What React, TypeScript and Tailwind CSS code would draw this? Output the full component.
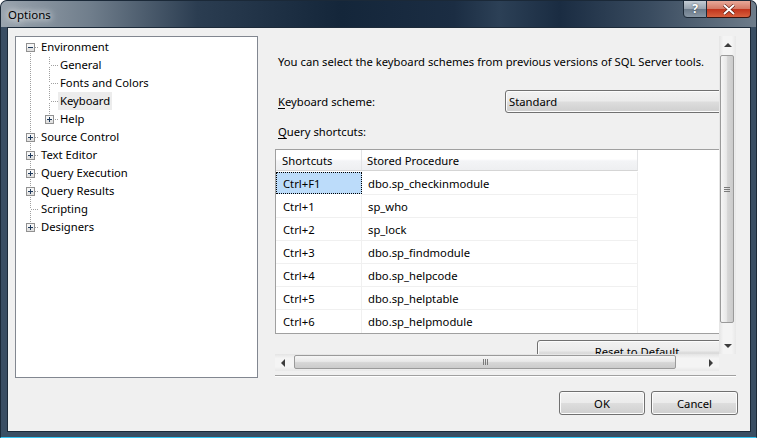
import React from 'react';

const FONT = "font-['Noto_Sans',sans-serif] text-[11.25px] leading-[16px] text-black";

// dotted line pieces for the tree gutter
const vdots = (x: number, y0: number, y1: number, k: string) => {
  const out: React.ReactNode[] = [];
  for (let y = y0; y <= y1; y++) if (y % 2 === 1) out.push(<rect key={k + y} x={x} y={y} width={1} height={1} fill="#a0a0a0" />);
  return out;
};
const hdots = (y: number, x0: number, x1: number, k: string) => {
  const out: React.ReactNode[] = [];
  for (let x = x0; x <= x1; x++) if (x % 2 === 1) out.push(<rect key={k + x} x={x} y={y} width={1} height={1} fill="#a0a0a0" />);
  return out;
};

const Box = ({ x, kind }: { x: number; kind: 'plus' | 'minus' }) => (
  <g>
    <rect x={x + 0.5} y={5.5} width={8} height={8} fill="#f6f6f6" stroke="#919191" />
    <rect x={x + 1} y={10} width={7} height={3} fill="#e2e2e2" />
    <rect x={x + 2} y={9} width={5} height={1} fill="#1e395b" />
    {kind === 'plus' && <rect x={x + 4} y={7} width={1} height={5} fill="#1e395b" />}
  </g>
);

type Row = {
  label: string;
  level: 0 | 1;
  exp?: 'plus' | 'minus';
  top?: boolean;
  bottom?: boolean;
  cTop?: boolean;
  cBottom?: boolean;
  selected?: boolean;
};

const rows: Row[] = [
  { label: 'Environment', level: 0, exp: 'minus', bottom: true },
  { label: 'General', level: 1, cTop: true, cBottom: true },
  { label: 'Fonts and Colors', level: 1, cTop: true, cBottom: true },
  { label: 'Keyboard', level: 1, cTop: true, cBottom: true, selected: true },
  { label: 'Help', level: 1, exp: 'plus', cTop: true },
  { label: 'Source Control', level: 0, exp: 'plus', top: true, bottom: true },
  { label: 'Text Editor', level: 0, exp: 'plus', top: true, bottom: true },
  { label: 'Query Execution', level: 0, exp: 'plus', top: true, bottom: true },
  { label: 'Query Results', level: 0, exp: 'plus', top: true, bottom: true },
  { label: 'Scripting', level: 0, top: true, bottom: true },
  { label: 'Designers', level: 0, exp: 'plus', top: true },
];

const Gutter = ({ r }: { r: Row }) => {
  const w = r.level === 0 ? 23 : 42;
  const b = !!r.exp;
  return (
    <svg width={w} height={18} className="shrink-0">
      {r.level === 0 ? (
        <>
          {r.top && vdots(14, 0, b ? 4 : 8, 't')}
          {r.bottom && vdots(14, b ? 14 : 10, 17, 'b')}
          {hdots(9, b ? 19 : 15, 22, 'h')}
          {r.exp && <Box x={10} kind={r.exp} />}
        </>
      ) : (
        <>
          {vdots(14, 0, 17, 'p')}
          {r.cTop && vdots(33, 0, b ? 4 : 8, 't')}
          {r.cBottom && vdots(33, b ? 14 : 10, 17, 'b')}
          {hdots(9, b ? 38 : 34, 41, 'h')}
          {r.exp && <Box x={29} kind={r.exp} />}
        </>
      )}
    </svg>
  );
};

const Tree = () => (
  <div className="w-[243px] h-[342px] shrink-0 border border-[#828790] bg-white pt-[1px]">
    {rows.map((r) => (
      <div key={r.label} className="flex h-[18px] items-center">
        <Gutter r={r} />
        <span className={`h-[18px] px-[2px] leading-[18px] ${r.selected ? 'bg-[#ececec]' : ''}`}>{r.label}</span>
      </div>
    ))}
  </div>
);

const Arrow = ({ dir }: { dir: 'up' | 'down' | 'left' | 'right' }) => {
  const pts = {
    up: '5,2 1,6 9,6',
    down: '1,2 9,2 5,6',
    left: '6,1 6,9 2,5',
    right: '3,1 3,9 7,5',
  }[dir];
  const vert = dir === 'up' || dir === 'down';
  return (
    <div className="w-[17px] h-[17px] shrink-0 flex items-center justify-center">
      <svg width={vert ? 10 : 9} height={vert ? 8 : 10}>
        <polygon points={pts} fill="#3c3c3c" />
      </svg>
    </div>
  );
};

const VScroll = () => (
  <div className="w-[17px] h-[318px] shrink-0 flex flex-col bg-[linear-gradient(90deg,#e4e4e4,#f4f4f4_25%,#f4f4f4_75%,#e8e8e8)]">
    <Arrow dir="up" />
    <div className="mt-[2px] ml-[1px] w-[14px] h-[268px] rounded-[2px] border border-[#9a9a9a] bg-[linear-gradient(90deg,#f6f6f6,#e8e8e8_45%,#d6d6d6_55%,#cbcbcb)] flex items-center justify-center">
      <div className="flex flex-col gap-[1px]">
        <div className="w-[6px] h-[1px] bg-[#7a7a7a]" />
        <div className="w-[6px] h-[1px] bg-[#7a7a7a]" />
        <div className="w-[6px] h-[1px] bg-[#7a7a7a]" />
      </div>
    </div>
    <div className="flex-1" />
    <Arrow dir="down" />
  </div>
);

const HScroll = () => (
  <div className="w-[444px] h-[17px] shrink-0 flex bg-[linear-gradient(#e4e4e4,#f4f4f4_25%,#f4f4f4_75%,#e8e8e8)]">
    <Arrow dir="left" />
    <div className="ml-[2px] mt-[1px] w-[382px] h-[14px] rounded-[2px] border border-[#9a9a9a] bg-[linear-gradient(#f6f6f6,#e8e8e8_45%,#d6d6d6_55%,#cbcbcb)] flex items-center justify-center">
      <div className="flex gap-[1px]">
        <div className="w-[1px] h-[6px] bg-[#7a7a7a]" />
        <div className="w-[1px] h-[6px] bg-[#7a7a7a]" />
        <div className="w-[1px] h-[6px] bg-[#7a7a7a]" />
      </div>
    </div>
    <div className="flex-1" />
    <Arrow dir="right" />
  </div>
);

const shortcuts = [
  ['Ctrl+F1', 'dbo.sp_checkinmodule'],
  ['Ctrl+1', 'sp_who'],
  ['Ctrl+2', 'sp_lock'],
  ['Ctrl+3', 'dbo.sp_findmodule'],
  ['Ctrl+4', 'dbo.sp_helpcode'],
  ['Ctrl+5', 'dbo.sp_helptable'],
  ['Ctrl+6', 'dbo.sp_helpmodule'],
];

const btn =
  'rounded-[3px] border border-[#707070] bg-[linear-gradient(#f2f2f2_0%,#ebebeb_48%,#dddddd_52%,#cfcfcf_100%)] shadow-[inset_0_0_0_1px_#fcfcfc]';

const ShortcutTable = () => (
  <div className="mt-[9px] w-[520px] shrink-0 border-t border-b border-l border-[#a0a0a0] bg-white">
    <div className="flex h-[21px]">
      <div className="w-[86px] border-r border-b border-r-[#e2e3e5] border-b-[#d5d5d5] pl-[6px] pt-[1px] leading-[19px] bg-[linear-gradient(#ffffff,#ffffff_45%,#f3f4f6_55%,#eeeff1)]">
        Shortcuts
      </div>
      <div className="w-[276px] border-r border-b border-r-[#e2e3e5] border-b-[#d5d5d5] pl-[5px] pt-[1px] leading-[19px] bg-[linear-gradient(#ffffff,#ffffff_45%,#f3f4f6_55%,#eeeff1)]">
        Stored Procedure
      </div>
    </div>
    <div className="pt-[1px]">
      {shortcuts.map(([k, p], i) => (
        <div key={k} className="flex h-[23px]">
          <div
            className={`w-[86px] pl-[7px] pt-[1px] leading-[21px] ${
              i === 0
                ? 'h-[22px] bg-[#bcdcfa] outline-1 outline-dotted outline-black -outline-offset-1'
                : 'border-r border-b border-[#f0f0f0]'
            } ${i === shortcuts.length - 1 ? 'border-b-0' : ''}`}
          >
            {k}
          </div>
          <div
            className={`w-[276px] border-r border-[#f0f0f0] pl-[6px] pt-[1px] leading-[21px] ${
              i < shortcuts.length - 1 ? 'border-b' : ''
            }`}
          >
            {p}
          </div>
        </div>
      ))}
    </div>
  </div>
);

const RightPanel = () => (
  <div className="w-[461px] flex flex-col">
    <div className="flex">
      <div className="w-[444px] h-[318px] overflow-hidden flex flex-col">
        <div className="pt-[18px] pl-[3px] whitespace-nowrap">
          You can select the keyboard schemes from previous versions of SQL Server tools.
        </div>
        <div className="mt-[20px] flex h-[23px] items-center">
          <div className="w-[230px] shrink-0 pl-[3px] pt-[1px]">
            <span className="underline underline-offset-2">K</span>eyboard scheme:
          </div>
          <div className={`${btn} w-[240px] h-[23px] shrink-0 pl-[3px] pt-[1px] leading-[20px]`}>Standard</div>
        </div>
        <div className="mt-[10px] pt-[1px] pl-[3px]">
          <span className="underline underline-offset-2">Q</span>uery shortcuts:
        </div>
        <ShortcutTable />
        <div className={`${btn} mt-[6px] ml-[262px] w-[200px] h-[23px] shrink-0 text-center pt-[1px] leading-[20px]`}>
          Reset to Default
        </div>
      </div>
      <VScroll />
    </div>
    <div className="flex">
      <HScroll />
      <div className="w-[17px] h-[17px] bg-[#f0f0f0]" />
    </div>
    <div className="mt-[4px] h-[2px] border-t border-[#a0a0a0] bg-white" />
  </div>
);

export default function App() {
  return (
    <div className={`${FONT} w-[757px] h-[438px] flex flex-col rounded-t-[7px] border border-[#1b2938] border-b-[#36c6f4] bg-[#3a4e63] overflow-hidden`}>
      <div className="h-[26px] shrink-0 flex items-start bg-[linear-gradient(90deg,#9aa4ae_0%,#6f7d8b_12%,#2b3d51_26%,#14263a_45%,#1b2d43_60%,#2c4056_66%,#1a2c42_74%,#3a4c60_86%,#6e7c8a_100%)]">
        <div className="ml-[7px] mt-[6px] text-[11.5px] text-black [text-shadow:0_0_6px_#ffffff,0_0_10px_#ffffff]">Options</div>
        <div className="flex-1" />
        <div className="mr-[5px] flex h-[18px] -mt-[1px]">
          <div className="w-[24px] h-[18px] rounded-bl-[4px] border border-[#1d2a38] bg-[linear-gradient(#c4ccd4,#98a4b0_48%,#6b7a8a_52%,#8896a4)] flex items-center justify-center text-[12px] font-bold text-white [text-shadow:0_0_2px_#303a44]">
            ?
          </div>
          <div className="w-[44px] h-[18px] rounded-br-[4px] border border-l-0 border-[#3a1410] bg-[linear-gradient(#e8a898,#d47a66_48%,#c2341c_52%,#d8603e)] flex items-center justify-center">
            <svg width="14" height="11" viewBox="0 0 14 11">
              <path d="M2 1 L12 10 M12 1 L2 10" stroke="#5a1a10" strokeWidth="3.2" />
              <path d="M2 1 L12 10 M12 1 L2 10" stroke="#ffffff" strokeWidth="2" />
            </svg>
          </div>
        </div>
      </div>
      <div className="ml-[6px] mr-[5px] h-[405px] shrink-0 border border-[#1c2a39] bg-[#f0f0f0] flex flex-col">
        <div className="flex pt-[8px] pl-[7px] gap-[17px]">
          <Tree />
          <RightPanel />
        </div>
        <div className="mt-[13px] flex justify-end gap-[6px] pr-[12px]">
          <div className={`${btn} w-[86px] h-[24px] text-center pt-[1px] leading-[21px] border-[#3c7fb1] shadow-[inset_0_0_0_1px_#7fd4f6]`}>OK</div>
          <div className={`${btn} w-[87px] h-[24px] text-center pt-[1px] leading-[21px]`}>Cancel</div>
        </div>
      </div>
    </div>
  );
}
